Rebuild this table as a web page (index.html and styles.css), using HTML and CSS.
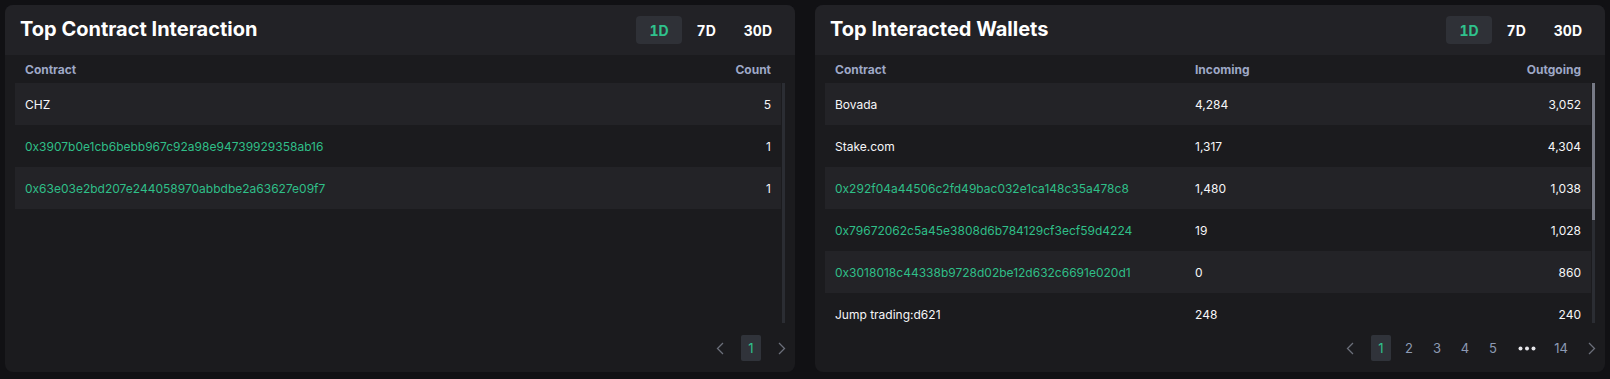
FILE: index.html
```html
<!DOCTYPE html>
<html>
<head>
<meta charset="utf-8">
<link rel="stylesheet" href="styles.css">
</head>
<body>
<div class="page">
  <section class="card">
    <header class="card-head">
      <h2 class="title">Top Contract Interaction</h2>
      <div class="tabs">
        <span class="tab active">1D</span>
        <span class="tab">7D</span>
        <span class="tab">30D</span>
      </div>
    </header>
    <div class="thead cols-2">
      <span>Contract</span>
      <span class="r">Count</span>
    </div>
    <div class="scroll">
      <div class="rows">
        <div class="row cols-2 odd"><span>CHZ</span><span class="r">5</span></div>
        <div class="row cols-2"><span class="link">0x3907b0e1cb6bebb967c92a98e94739929358ab16</span><span class="r">1</span></div>
        <div class="row cols-2 odd"><span class="link">0x63e03e2bd207e244058970abbdbe2a63627e09f7</span><span class="r">1</span></div>
      </div>
      <div class="track"></div>
    </div>
    <nav class="pager">
      <span class="arrow"><svg width="8" height="13" viewBox="0 0 8 13"><path d="M7 1 L1.5 6.5 L7 12" fill="none" stroke="#6b6f7a" stroke-width="1.3"/></svg></span>
      <span class="pg active">1</span>
      <span class="arrow"><svg width="8" height="13" viewBox="0 0 8 13"><path d="M1 1 L6.5 6.5 L1 12" fill="none" stroke="#6b6f7a" stroke-width="1.3"/></svg></span>
    </nav>
  </section>

  <section class="card">
    <header class="card-head">
      <h2 class="title">Top Interacted Wallets</h2>
      <div class="tabs">
        <span class="tab active">1D</span>
        <span class="tab">7D</span>
        <span class="tab">30D</span>
      </div>
    </header>
    <div class="thead cols-3">
      <span>Contract</span>
      <span>Incoming</span>
      <span class="r">Outgoing</span>
    </div>
    <div class="scroll">
      <div class="rows">
        <div class="row cols-3 odd"><span>Bovada</span><span>4,284</span><span class="r">3,052</span></div>
        <div class="row cols-3"><span>Stake.com</span><span>1,317</span><span class="r">4,304</span></div>
        <div class="row cols-3 odd"><span class="link">0x292f04a44506c2fd49bac032e1ca148c35a478c8</span><span>1,480</span><span class="r">1,038</span></div>
        <div class="row cols-3"><span class="link">0x79672062c5a45e3808d6b784129cf3ecf59d4224</span><span>19</span><span class="r">1,028</span></div>
        <div class="row cols-3 odd"><span class="link">0x3018018c44338b9728d02be12d632c6691e020d1</span><span>0</span><span class="r">860</span></div>
        <div class="row cols-3"><span>Jump trading:d621</span><span>248</span><span class="r">240</span></div>
      </div>
      <div class="track"><div class="thumb"></div></div>
    </div>
    <nav class="pager">
      <span class="arrow"><svg width="8" height="13" viewBox="0 0 8 13"><path d="M7 1 L1.5 6.5 L7 12" fill="none" stroke="#6b6f7a" stroke-width="1.3"/></svg></span>
      <span class="pg active">1</span>
      <span class="pg">2</span>
      <span class="pg">3</span>
      <span class="pg">4</span>
      <span class="pg">5</span>
      <span class="dots"><svg width="18" height="5" viewBox="0 0 18 5"><circle cx="2.5" cy="2.5" r="2" fill="#e6e6ea"/><circle cx="9" cy="2.5" r="2" fill="#e6e6ea"/><circle cx="15.5" cy="2.5" r="2" fill="#e6e6ea"/></svg></span>
      <span class="pg">14</span>
      <span class="arrow"><svg width="8" height="13" viewBox="0 0 8 13"><path d="M1 1 L6.5 6.5 L1 12" fill="none" stroke="#6b6f7a" stroke-width="1.3"/></svg></span>
    </nav>
  </section>
</div>
</body>
</html>
```

FILE: styles.css
```css
* { box-sizing: border-box; }
html, body { margin: 0; padding: 0; }
body {
  background: #111114;
  font-family: Inter, "Noto Sans", sans-serif;
  color: #f2f2f4;
}
.page {
  display: flex;
  gap: 20px;
  padding: 5px;
}
.card {
  width: 790px;
  height: 367px;
  background: #1b1b1e;
  border-radius: 8px;
  display: flex;
  flex-direction: column;
  overflow: hidden;
}
.card-head {
  height: 50px;
  flex: none;
  background: #222226;
  display: flex;
  align-items: center;
  justify-content: space-between;
  padding: 0 10px 0 15px;
}
.title {
  margin: 0 0 3px 0;
  font-size: 20px;
  font-weight: 700;
  color: #ffffff;
}
.tabs {
  display: flex;
  gap: 2px;
}
.tab {
  height: 28px;
  padding: 0 13px;
  display: flex;
  align-items: center;
  font-size: 14px;
  font-weight: 700;
  color: #ffffff;
  border-radius: 4px;
  font-variant-numeric: tabular-nums;
}
.tab.active {
  background: #2f3137;
  color: #2fc18c;
}
.thead {
  height: 28px;
  flex: none;
  margin: 0 14px 0 10px;
  padding: 0 10px;
  font-size: 12px;
  font-weight: 700;
  color: #9ea8c6;
}
.cols-2 {
  display: grid;
  grid-template-columns: 1fr auto;
  align-items: center;
}
.cols-3 {
  display: grid;
  grid-template-columns: 360px 1fr 1fr;
  align-items: center;
}
.r { text-align: right; }
.scroll {
  height: 240px;
  flex: none;
  display: flex;
  margin: 0 10px;
  gap: 1px;
  overflow: hidden;
}
.rows {
  flex: 1;
  min-width: 0;
}
.row {
  height: 42px;
  padding: 0 10px;
  font-size: 12px;
  font-weight: 400;
  color: #f6f6f8;
}
.row.odd { background: #232327; }
.link { color: #2fbf88; }
.track {
  width: 3px;
  flex: none;
  background: #2b2d33;
}
.thumb {
  height: 137px;
  background: #777a86;
}
.pager {
  margin-top: 12px;
  display: flex;
  justify-content: flex-end;
  align-items: center;
  gap: 8px;
  height: 26px;
}
.arrow {
  width: 26px;
  height: 26px;
  display: flex;
  align-items: center;
  justify-content: center;
}
.pg {
  min-width: 20px;
  height: 26px;
  display: flex;
  align-items: center;
  justify-content: center;
  font-size: 13px;
  color: #8d9ab4;
  border-radius: 2px;
}
.pg.active {
  background: #30333a;
  color: #2fc18c;
}
.dots {
  width: 32px;
  height: 26px;
  display: flex;
  align-items: center;
  justify-content: center;
}
```
